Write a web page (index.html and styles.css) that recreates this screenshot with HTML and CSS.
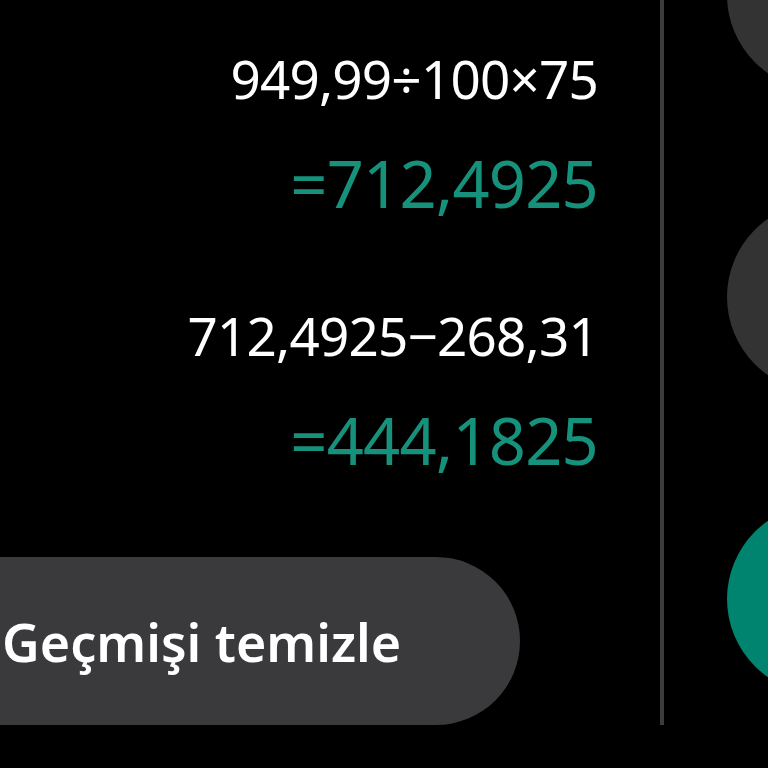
FILE: index.html
```html
<!DOCTYPE html>
<html lang="tr">
<head>
    <meta charset="UTF-8">
    <meta name="viewport" content="width=device-width, initial-scale=1.0">
    <title>Hesap makinesi geçmişi</title>
    <link rel="stylesheet" href="styles.css">
</head>
<body>
    <div class="screen">
        <div class="history">
            <div class="entries">
                <div class="entry">
                    <div class="expr">949,99÷100×75</div>
                    <div class="result">=712,4925</div>
                </div>
                <div class="entry">
                    <div class="expr">712,4925−268,31</div>
                    <div class="result">=444,1825</div>
                </div>
            </div>
            <button class="clear-btn">Geçmişi temizle</button>
        </div>

        <div class="keys">
            <div class="key"></div>
            <div class="key"></div>
            <div class="key key-green"></div>
        </div>
    </div>
</body>
</html>
```

FILE: styles.css
```css
html, body {
    margin: 0;
    height: 100%;
    background: #000;
    overflow: hidden;
}
body {
    font-family: "Noto Sans", "Open Sans", sans-serif;
    color: #fff;
}
.screen {
    display: flex;
    width: 768px;
    height: 768px;
    overflow: hidden;
}
.history {
    flex-shrink: 0;
    width: 660px;
    height: 725px;
    border-right: 4px solid #3c3c3c;
    display: flex;
    flex-direction: column;
}
.entries {
    padding-right: 62px;
    text-align: right;
    padding-top: 43px;
}
.entry {
    margin-bottom: 63px;
}
.expr {
    font-size: 53px;
    line-height: 72px;
    letter-spacing: -0.8px;
}
.result {
    margin-top: 14px;
    font-size: 65px;
    line-height: 108px;
    color: #16917b;
    letter-spacing: -0.8px;
}
.clear-btn {
    margin-top: auto;
    width: 520px;
    height: 170px;
    border: none;
    border-radius: 0 85px 85px 0;
    background: #3a3a3c;
    color: #fff;
    font-family: inherit;
    font-size: 52px;
    font-weight: 600;
    text-align: left;
    padding: 0 0 0 2px;
}
.keys {
    flex-shrink: 0;
    margin-left: 63px;
    display: flex;
    flex-direction: column;
    gap: 112px;
    margin-top: -100px;
}
.key {
    width: 190px;
    height: 190px;
    border-radius: 50%;
    background: #333;
    flex-shrink: 0;
}
.key-green {
    background: #00846f;
}
```
